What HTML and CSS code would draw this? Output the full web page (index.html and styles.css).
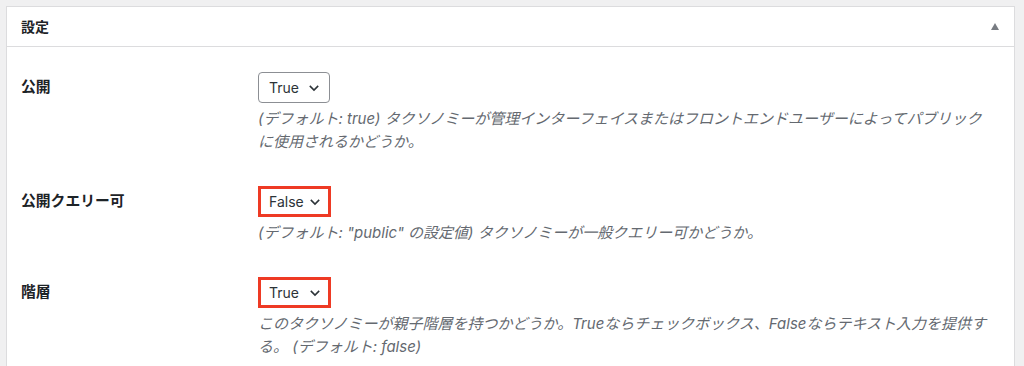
FILE: index.html
```html
<!DOCTYPE html>
<html lang="ja">
<head>
<meta charset="utf-8">
<title>設定</title>
<link rel="stylesheet" href="styles.css">
</head>
<body>
<div class="panel">
  <div class="panel-head">
    <h2 class="panel-title">設定</h2>
    <svg class="toggle" width="8" height="7" viewBox="0 0 8 7"><polygon points="4,0 8,7 0,7" fill="#787c82"/></svg>
  </div>
  <div class="form">
    <div class="row">
      <div class="label">公開</div>
      <div class="field">
        <div class="select"><span>True</span><svg class="chev" width="14" height="14" viewBox="0 0 20 20"><path d="M4 7l6 6 6-6" fill="none" stroke="#2c3338" stroke-width="2.2"/></svg></div>
        <p class="desc">(デフォルト: true) タクソノミーが管理インターフェイスまたはフロントエンドユーザーによってパブリックに使用されるかどうか。</p>
      </div>
    </div>
    <div class="row">
      <div class="label">公開クエリー可</div>
      <div class="field">
        <div class="select marked"><span>False</span><svg class="chev" width="14" height="14" viewBox="0 0 20 20"><path d="M4 7l6 6 6-6" fill="none" stroke="#2c3338" stroke-width="2.2"/></svg></div>
        <p class="desc">(デフォルト: "public" の設定値) タクソノミーが一般クエリー可かどうか。</p>
      </div>
    </div>
    <div class="row">
      <div class="label">階層</div>
      <div class="field">
        <div class="select marked"><span>True</span><svg class="chev" width="14" height="14" viewBox="0 0 20 20"><path d="M4 7l6 6 6-6" fill="none" stroke="#2c3338" stroke-width="2.2"/></svg></div>
        <p class="desc">このタクソノミーが親子階層を持つかどうか。Trueならチェックボックス、Falseならテキスト入力を提供する。 (デフォルト: false)</p>
      </div>
    </div>
  </div>
</div>
</body>
</html>
```

FILE: styles.css
```css
html, body {
  margin: 0;
  padding: 0;
  background: #f0f0f1;
  font-family: Inter, "Noto Sans CJK JP", sans-serif;
  color: #1d2327;
}

.panel {
  margin: 6px 9px 0 6px;
  background: #ffffff;
  border: 1px solid #dcdcde;
  min-height: 400px;
}

.panel-head {
  height: 39px;
  border-bottom: 1px solid #dcdcde;
  display: flex;
  align-items: center;
  justify-content: space-between;
  padding: 0 15px 0 14px;
}

.panel-title {
  margin: 0;
  font-size: 14px;
  font-weight: 700;
  line-height: 1;
}

.toggle {
  display: block;
  margin-top: -1px;
}

.form {
  padding: 0 21px 0 14px;
}

.row {
  display: grid;
  grid-template-columns: 237px 1fr;
  padding: 25px 0 8px;
}

.label {
  font-size: 14.8px;
  font-weight: 700;
  line-height: 31px;
}

.select {
  display: flex;
  align-items: center;
  justify-content: space-between;
  box-sizing: border-box;
  width: 72px;
  height: 31px;
  padding: 0 8px 0 10px;
  border: 1px solid #8c8f94;
  border-radius: 4px;
  font-size: 14px;
  color: #2c3338;
}

.select.marked {
  width: 73px;
  border-radius: 0;
  border-color: transparent;
  outline: 3px solid #ee3a24;
  outline-offset: -3px;
}

.chev {
  display: block;
}

.desc {
  margin: 4px 0 0;
  font-size: 15px;
  line-height: 23px;
  font-style: italic;
  color: #646970;
}
```
